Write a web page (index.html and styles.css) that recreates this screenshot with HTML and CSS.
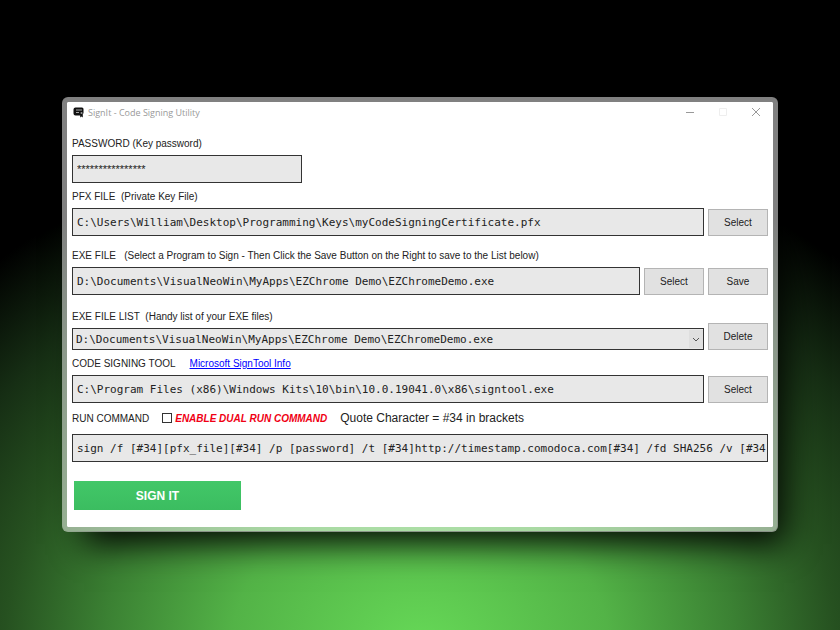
FILE: index.html
```
<!DOCTYPE html>
<html lang="en">
<head>
    <meta charset="UTF-8">
    <meta name="viewport" content="width=device-width, initial-scale=1.0">
    <title>SignIt - Code Signing Utility</title>
    <link rel="stylesheet" href="styles.css">
</head>
<body>

<div class="window">
    <header class="titlebar">
        <svg class="app-icon" viewBox="0 0 11 11" aria-hidden="true">
            <path d="M2.5 .5H9Q10.500 .5 10.500 2V6.500H9.800V10.500L8.500 9.500L7.200 10.500V8.500H2.500Q.5 8.500 .5 6.500V2.500Q.5 .5 2.500 .5Z" fill="#111"/>
            <path d="M3 3H9M3 5.500H6" stroke="#ccc" stroke-width=".8"/>
            <circle cx="8.500" cy="6" r="1" fill="#999"/>
        </svg>
        <span class="title">SignIt - Code Signing Utility</span>
        <div class="window-controls">
            <button type="button" aria-label="Minimize">
                <svg viewBox="0 0 10 10"><path d="M1 5.500H9" stroke="#999"/></svg>
            </button>
            <button type="button" aria-label="Maximize" disabled>
                <svg viewBox="0 0 10 10"><path d="M1.500 1.500H8.500V8.500H1.500Z" stroke="#eee"/></svg>
            </button>
            <button type="button" aria-label="Close">
                <svg viewBox="0 0 10 10"><path d="M1 1L9 9M9 1L1 9" stroke="#999"/></svg>
            </button>
        </div>
    </header>

    <form class="sign-form">
        <div class="caption"><label for="password">PASSWORD (Key password)</label></div>
        <div class="row">
            <input class="field password" id="password" type="text" value="****************">
        </div>

        <div class="caption"><label for="pfx-file">PFX FILE&nbsp; (Private Key File)</label></div>
        <div class="row">
            <input class="field" id="pfx-file" type="text" value="C:\Users\William\Desktop\Programming\Keys\myCodeSigningCertificate.pfx">
            <button class="btn" type="button">Select</button>
        </div>

        <div class="caption spaced"><label for="exe-file">EXE FILE&nbsp;&nbsp; (Select a Program to Sign - Then Click the Save Button on the Right to save to the List below)</label></div>
        <div class="row">
            <input class="field" id="exe-file" type="text" value="D:\Documents\VisualNeoWin\MyApps\EZChrome Demo\EZChromeDemo.exe">
            <button class="btn" type="button">Select</button>
            <button class="btn" type="button">Save</button>
        </div>

        <div class="list-row">
            <div class="list-column">
                <div class="caption"><label for="exe-list">EXE FILE LIST&nbsp; (Handy list of your EXE files)</label></div>
                <div class="select-wrap">
                    <select class="field" id="exe-list">
                        <option>D:\Documents\VisualNeoWin\MyApps\EZChrome Demo\EZChromeDemo.exe</option>
                    </select>
                    <svg class="arrow" viewBox="0 0 14 18" aria-hidden="true"><path d="M4 8L7 11L10 8" stroke="#555"/></svg>
                </div>
            </div>
            <button class="btn" type="button">Delete</button>
        </div>

        <div class="caption">
            <label for="sign-tool">CODE SIGNING TOOL</label>
            <a class="tool-link" href="#">Microsoft SignTool Info</a>
        </div>
        <div class="row">
            <input class="field" id="sign-tool" type="text" value="C:\Program Files (x86)\Windows Kits\10\bin\10.0.19041.0\x86\signtool.exe">
            <button class="btn" type="button">Select</button>
        </div>

        <div class="caption command-caption">
            <label for="run-command">RUN COMMAND</label>
            <input class="check" id="dual-run" type="checkbox">
            <label class="dual-label" for="dual-run">ENABLE DUAL RUN COMMAND</label>
            <span class="hint">Quote Character = #34 in brackets</span>
        </div>
        <div class="row">
            <input class="field command" id="run-command" type="text" value="sign /f [#34][pfx_file][#34] /p [password] /t [#34]http://timestamp.comodoca.com[#34] /fd SHA256 /v [#34">
        </div>

        <button class="sign-btn" type="button">SIGN IT</button>
    </form>
</div>

</body>
</html>
```
FILE: styles.css
```
* {
    box-sizing: border-box;
}
body {
    margin: 0;
    min-height: 100vh;
    padding: 97px 62px;
    font-family: "Liberation Sans", Arial, sans-serif;
    font-size: 10px;
    color: #222;
    background: radial-gradient(ellipse 75% 83% at 50% 103%, #66d957 0%, #53b347 30%, #3b8133 50%, #265120 66%, #162e14 82%, #000 100%) #000;
}
.window {
    border: 5px solid rgba(255, 255, 255, 0.5);
    border-radius: 6px;
    background: #fff;
    background-clip: padding-box;
    box-shadow: 14px 20px 32px -8px rgba(0, 0, 0, 0.95);
}
.titlebar {
    display: flex;
    align-items: center;
    height: 20px;
    padding: 0 1px 0 6px;
}
.app-icon {
    width: 11px;
    height: 11px;
}
.title {
    margin-left: 4px;
    font-family: "Open Sans", sans-serif;
    font-size: 9px;
    color: #999;
}
.window-controls {
    display: flex;
    margin-left: auto;
}
.window-controls button {
    display: flex;
    justify-content: center;
    align-items: center;
    width: 33px;
    height: 20px;
    padding: 0;
    border: none;
    background: none;
}
.window-controls svg {
    width: 10px;
    height: 10px;
    fill: none;
}
.sign-form {
    padding: 13px 5px 17px;
}
.caption {
    display: flex;
    align-items: center;
    height: 16px;
    margin: 5px 0 4px;
    white-space: nowrap;
}
.sign-form .caption:first-child {
    margin-top: 0;
}
.sign-form .spaced {
    margin-top: 11px;
}
.row {
    display: flex;
    align-items: flex-end;
    gap: 4px;
}
.field {
    flex: 1;
    min-width: 0;
    height: 28px;
    padding: 0 4px;
    border: 1px solid #333;
    border-radius: 0;
    background: #e8e8e8;
    color: #222;
    font-family: "DejaVu Sans Mono", monospace;
    font-size: 11px;
}
.password {
    flex: 0 1 33%;
    font-family: "Liberation Sans", Arial, sans-serif;
}
.command {
    padding-right: 0;
}
.btn {
    width: 60px;
    height: 27px;
    padding: 0;
    border: 1px solid #b4b4b4;
    background: #e1e1e1;
    color: #222;
    font-family: inherit;
    font-size: 10px;
}
.list-row {
    display: flex;
    align-items: flex-end;
    gap: 4px;
    margin-top: 13px;
}
.list-column {
    flex: 1;
}
.select-wrap {
    display: flex;
    position: relative;
}
select.field {
    appearance: none;
    height: 22px;
    padding: 0 3px;
}
.arrow {
    position: absolute;
    top: 2px;
    right: 1px;
    width: 14px;
    height: 18px;
    fill: none;
    background: #dfdfdf;
}
.tool-link {
    margin-left: 14px;
    color: #00f;
}
.command-caption {
    margin: 7px 0 8px;
}
.check {
    appearance: none;
    width: 10px;
    height: 10px;
    margin: 0 3px 0 13px;
    border: 1px solid #333;
    background: #fff;
}
.dual-label {
    color: #f00014;
    font-weight: bold;
    font-style: italic;
}
.hint {
    margin-left: 13px;
    font-size: 12px;
}
.sign-btn {
    display: block;
    width: 24%;
    height: 29px;
    margin: 19px 0 0 2px;
    border: none;
    background: linear-gradient(#42c768, #3bbd60);
    color: #fff;
    font-family: inherit;
    font-size: 12px;
    font-weight: bold;
}
```
